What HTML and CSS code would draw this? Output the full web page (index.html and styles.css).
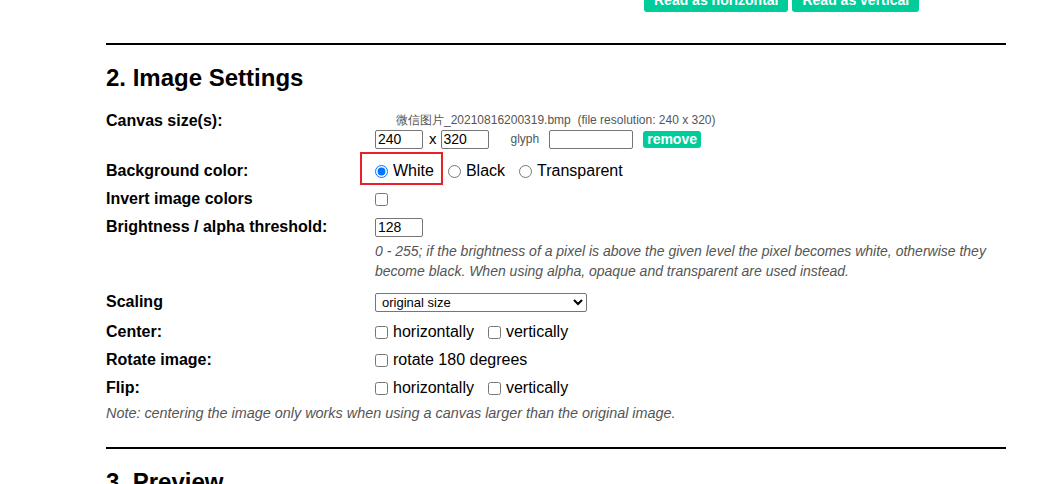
FILE: index.html
```html
<!DOCTYPE html>
<html>
<head>
<meta charset="utf-8">
<link rel="stylesheet" href="styles.css">
</head>
<body>
<div class="page">
  <div class="top-buttons">
    <button class="btn">Read as horizontal</button>
    <button class="btn">Read as vertical</button>
  </div>
  <hr class="rule">
  <h2 class="title">2. Image Settings</h2>
  <div class="settings">
    <div class="row row-canvas">
      <div class="label">Canvas size(s):</div>
      <div class="value">
        <div class="filename">微信图片_20210816200319.bmp&nbsp; (file resolution: 240 x 320)</div>
        <div class="size-line">
          <input class="num" type="text" value="240">
          <span class="times">x</span>
          <input class="num" type="text" value="320">
          <span class="glyph-label">glyph</span>
          <input class="glyph" type="text" value="">
          <button class="btn btn-small">remove</button>
        </div>
      </div>
    </div>
    <div class="row">
      <div class="label">Background color:</div>
      <div class="value bg-value">
        <span class="highlight"></span>
        <label class="opt"><input type="radio" name="bg" checked>White</label>
        <label class="opt"><input type="radio" name="bg">Black</label>
        <label class="opt"><input type="radio" name="bg">Transparent</label>
      </div>
    </div>
    <div class="row">
      <div class="label">Invert image colors</div>
      <div class="value"><input type="checkbox" class="solo"></div>
    </div>
    <div class="row">
      <div class="label">Brightness / alpha threshold:</div>
      <div class="value">
        <div class="line"><input class="num" type="text" value="128"></div>
        <div class="hint">0 - 255; if the brightness of a pixel is above the given level the pixel becomes white, otherwise they become black. When using alpha, opaque and transparent are used instead.</div>
      </div>
    </div>
    <div class="row row-scaling">
      <div class="label">Scaling</div>
      <div class="value">
        <select class="select">
          <option>original size</option>
        </select>
      </div>
    </div>
    <div class="row">
      <div class="label">Center:</div>
      <div class="value">
        <label class="opt"><input type="checkbox">horizontally</label>
        <label class="opt"><input type="checkbox">vertically</label>
      </div>
    </div>
    <div class="row">
      <div class="label">Rotate image:</div>
      <div class="value">
        <label class="opt"><input type="checkbox">rotate 180 degrees</label>
      </div>
    </div>
    <div class="row">
      <div class="label">Flip:</div>
      <div class="value">
        <label class="opt"><input type="checkbox">horizontally</label>
        <label class="opt"><input type="checkbox">vertically</label>
      </div>
    </div>
  </div>
  <div class="note">Note: centering the image only works when using a canvas larger than the original image.</div>
  <hr class="rule rule-bottom">
  <h2 class="title">3. Preview</h2>
</div>
</body>
</html>
```

FILE: styles.css
```css
html, body {
  margin: 0;
  padding: 0;
  background: #fff;
  overflow: hidden;
}
body {
  font-family: "Liberation Sans", Arial, sans-serif;
  color: #000;
  font-size: 16px;
}
.page {
  width: 900px;
  margin-left: 106px;
}
.top-buttons {
  display: flex;
  gap: 4px;
  padding-left: 538px;
  margin-top: -12px;
  height: 24px;
}
.btn {
  background: #00cc99;
  color: #fff;
  border: none;
  border-radius: 3px;
  font-family: "Liberation Sans", Arial, sans-serif;
  font-weight: bold;
  font-size: 14px;
  padding: 0 10px;
  height: 24px;
  line-height: 24px;
}
.rule {
  border: none;
  border-top: 2px solid #000;
  margin: 31px 0 0 0;
  height: 0;
}
.title {
  font-size: 24px;
  font-weight: bold;
  margin: 19px 0 0 0;
  line-height: 28px;
  height: 28px;
}
.settings {
  margin-top: 15px;
}
.row {
  display: grid;
  grid-template-columns: 269px 631px;
  padding: 4px 0;
  line-height: 20px;
}
.label {
  font-weight: bold;
  font-size: 16px;
}
.value {
  position: relative;
  display: flex;
  align-items: center;
  flex-wrap: wrap;
  min-height: 20px;
}
.row-canvas {
  padding-bottom: 8px;
}
.row-canvas .value {
  display: block;
}
.filename {
  font-size: 12px;
  color: #555;
  padding-left: 21px;
  line-height: 18px;
}
.size-line {
  display: flex;
  align-items: center;
  height: 20px;
}
.num {
  width: 48px;
  height: 19px;
  box-sizing: border-box;
  border: 1px solid #767676;
  border-radius: 2px;
  padding: 0 2px;
  margin: 0;
  font-family: "Liberation Sans", Arial, sans-serif;
  font-size: 14px;
}
.times {
  font-size: 15px;
  margin: 0 4px 0 6px;
}
.glyph-label {
  font-size: 12px;
  color: #555;
  margin: 0 10px 0 22px;
}
.glyph {
  width: 84px;
  height: 19px;
  box-sizing: border-box;
  border: 1px solid #767676;
  border-radius: 2px;
  margin: 0 10px 0 0;
}
.btn-small {
  height: 17px;
  line-height: 17px;
  padding: 0 4px;
  border-radius: 3px;
}
.line {
  display: flex;
  align-items: center;
  height: 20px;
  width: 100%;
}
.hint {
  font-size: 14px;
  font-style: italic;
  color: #555;
  line-height: 20px;
  margin-top: 4px;
  width: 100%;
}
.opt {
  display: inline-flex;
  align-items: center;
  margin-right: 14px;
  font-size: 16px;
}
.opt input, .solo {
  width: 13px;
  height: 13px;
  margin: 0 5px 0 0;
}
.highlight {
  position: absolute;
  left: -15px;
  top: -9px;
  width: 83px;
  height: 33px;
  box-sizing: border-box;
  border: 2px solid #e8202a;
  pointer-events: none;
}
.row-scaling {
  padding: 7px 0 6px;
}
.select {
  width: 212px;
  height: 19px;
  font-family: "Liberation Sans", Arial, sans-serif;
  font-size: 13px;
  border: 1px solid #767676;
  border-radius: 2px;
  background: #fff;
  padding: 0 2px;
}
.note {
  font-size: 14.4px;
  font-style: italic;
  color: #555;
  line-height: 20px;
  margin-top: 1px;
}
.rule-bottom {
  margin-top: 24px;
}
```
